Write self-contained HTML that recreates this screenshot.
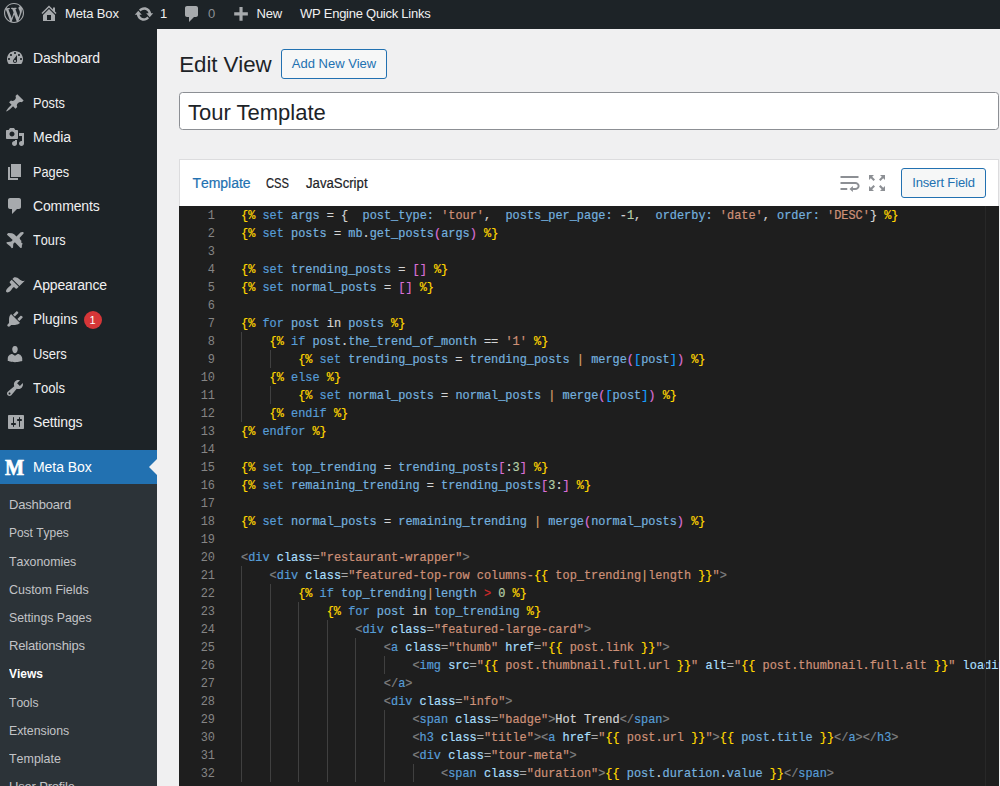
<!DOCTYPE html>
<html lang="en"><head><meta charset="utf-8"><title>Edit View ‹ Meta Box — WordPress</title>
<style>
*{box-sizing:border-box;margin:0;padding:0}
html,body{width:1000px;height:786px;overflow:hidden;background:#f0f0f1;font-family:"Liberation Sans",sans-serif}
body{position:relative}
.t{position:absolute;white-space:pre;line-height:1.2;font-kerning:none}
.ic{position:absolute;display:block}
#bar{position:absolute;left:0;top:0;width:1000px;height:29px;background:#1d2327}
#menu{position:absolute;left:0;top:29px;width:157px;height:757px;background:#1d2327}
#menu .t,#menu .ic,#menu>div{margin-top:-29px}
#active{position:absolute;left:0;top:450px;width:157px;height:34px;background:#2271b1}
#arrow{position:absolute;left:149px;top:459px;width:0;height:0;border:8px solid transparent;border-left:0;border-right:8px solid #f0f0f1}
#sub{position:absolute;left:0;top:484px;width:157px;height:302px;background:#2c3338}
.badge{left:84px;top:311px;width:18px;height:18px;border-radius:9px;background:#d63638;color:#fff;font-size:11px;line-height:18px;text-align:center;text-indent:-1px}
.btn{position:absolute;border:1px solid #2271b1;border-radius:3px;background:#f6f7f7;color:#2271b1;font-size:13px;text-align:center;line-height:28px;white-space:pre}
#title{position:absolute;left:179px;top:92px;width:820px;height:38px;border:1px solid #8c8f94;border-radius:3.5px;background:#fff;color:#1d2327;font-size:22px;line-height:36px;padding-left:8px;padding-top:2px;white-space:pre}
#panel{position:absolute;left:179px;top:159px;width:820px;height:627px;background:#fff;border:1px solid #dcdcde}
.sb{-webkit-text-stroke:.2px currentColor}
#ed{position:absolute;left:179px;top:206px;width:820px;height:580px;background:#1e1e1e;overflow:hidden;font-family:"Liberation Mono",monospace;font-size:11.9px;letter-spacing:0.0065px;color:#d4d4d4;font-kerning:none;-webkit-text-stroke:.2px currentColor}
.ln{position:absolute;left:62px;height:18px;line-height:18px;white-space:pre}
.no{position:absolute;right:100%;margin-right:26px;color:#858585;-webkit-text-stroke:0}
.gd{position:absolute;width:1px;background:#404040}
#ruler{position:absolute;left:806px;top:0;width:1px;height:580px;background:#282828}
.k{color:#569cd6}.v{color:#74b0df}.s{color:#ce9178}.y{color:#ffd700}.m{color:#da70d6}.b{color:#179fff}
.w{color:#d4d4d4}.g{color:#808080}.n{color:#b5cea8}.r{color:#d12a2a}.p{color:#d7a06a}.at{color:#a8defc}.e{color:#a8a8a8}

</style></head>
<body>
<div id="bar">
<svg class="ic" style="left:4px;top:3px;width:20px;height:20px" viewBox="0 0 20 20"><path fill="#a7aaad" d="M20 10c0-5.51-4.49-10-10-10C4.48 0 0 4.49 0 10c0 5.52 4.48 10 10 10 5.51 0 10-4.48 10-10zM7.78 15.37L4.37 6.22c.55-.02 1.17-.08 1.17-.08.5-.06.44-1.13-.06-1.11 0 0-1.45.11-2.37.11-.18 0-.37 0-.58-.01C4.12 2.69 6.87 1.11 10 1.11c2.33 0 4.45.87 6.05 2.34-.68-.11-1.65.39-1.65 1.58 0 .74.45 1.36.9 2.1.35.61.55 1.36.55 2.46 0 1.49-1.4 5-1.4 5l-3.03-8.37c.54-.02.82-.17.82-.17.5-.05.44-1.25-.06-1.22 0 0-1.44.12-2.38.12-.87 0-2.33-.12-2.33-.12-.5-.03-.56 1.2-.06 1.22l.92.08 1.26 3.41zM17.41 10c.24-.64.74-1.87.43-4.25.7 1.29 1.05 2.71 1.05 4.25 0 3.29-1.73 6.24-4.4 7.78.97-2.59 1.94-5.2 2.92-7.78zM6.1 18.09C3.12 16.65 1.11 13.53 1.11 10c0-1.3.23-2.48.72-3.59C3.25 10.3 4.67 14.2 6.1 18.09zm4.03-6.63l2.58 6.98c-.86.29-1.76.45-2.71.45-.79 0-1.57-.11-2.29-.33.81-2.38 1.62-4.74 2.42-7.1z"/></svg>
<svg class="ic" style="left:39px;top:3px;width:20px;height:20px" viewBox="0 0 20 20"><path fill="#a7aaad" d="M16 8.5l1.53 1.53-1.06 1.06L10 4.62l-6.47 6.47-1.06-1.06L10 2.5l4 4v-2h2v4zm-6-2.46l6 5.99V18H4v-5.97zM12 17v-5H8v5h4z"/></svg>
<div class="t " style="left:65px;top:6px;font-size:13px;color:#f0f0f1;letter-spacing:-0.14px;">Meta Box</div>
<svg class="ic" style="left:134px;top:4px;width:20px;height:20px" viewBox="0 0 20 20"><path fill="#a7aaad" d="M10.2 3.28c3.53 0 6.43 2.61 6.92 6h2.08l-3.5 4-3.5-4h2.32c-.45-1.97-2.21-3.45-4.32-3.45-1.45 0-2.73.71-3.54 1.78L4.95 5.66C6.23 4.2 8.11 3.28 10.2 3.28zm-.4 13.44c-3.52 0-6.43-2.61-6.92-6H.8l3.5-4c1.17 1.33 2.33 2.67 3.5 4H5.48c.45 1.97 2.21 3.45 4.32 3.45 1.45 0 2.73-.71 3.54-1.78l1.71 1.95c-1.28 1.46-3.15 2.38-5.25 2.38z"/></svg>
<div class="t " style="left:160px;top:6px;font-size:13px;color:#f0f0f1;">1</div>
<svg class="ic" style="left:181.6px;top:4px;width:20px;height:20px" viewBox="0 0 20 20"><path fill="#a7aaad" d="M5 2h9c1.1 0 2 .9 2 2v7c0 1.1-.9 2-2 2h-2l-5 5v-5H5c-1.1 0-2-.9-2-2V4c0-1.1.9-2 2-2z"/></svg>
<div class="t " style="left:208px;top:6px;font-size:13px;color:#8c8f94;">0</div>
<svg class="ic" style="left:230px;top:4.5px;width:21px;height:21px" viewBox="0 0 20 20"><path fill="#a7aaad" d="M17 7v3h-5v5H9v-5H4V7h5V2h3v5h5z"/></svg>
<div class="t " style="left:256.5px;top:6px;font-size:13px;color:#f0f0f1;letter-spacing:-0.2px;">New</div>
<div class="t " style="left:300px;top:6px;font-size:13px;color:#f0f0f1;letter-spacing:-0.26px;">WP Engine Quick Links</div>
</div>
<div id="menu">
<svg class="ic" style="left:5px;top:48px;width:20px;height:20px" viewBox="0 0 20 20"><path fill="#a7aaad" d="M3.76 16h12.48c1.1-1.37 1.76-3.11 1.76-5 0-4.42-3.58-8-8-8s-8 3.58-8 8c0 1.89.66 3.63 1.76 5zM10 4c.55 0 1 .45 1 1s-.45 1-1 1-1-.45-1-1 .45-1 1-1zM6 6c.55 0 1 .45 1 1s-.45 1-1 1-1-.45-1-1 .45-1 1-1zm8 0c.55 0 1 .45 1 1s-.45 1-1 1-1-.45-1-1 .45-1 1-1zm-5.37 5.55L12 7v6c0 1.1-.9 2-2 2s-2-.9-2-2c0-.57.24-1.08.63-1.45zM4 10c.55 0 1 .45 1 1s-.45 1-1 1-1-.45-1-1 .45-1 1-1zm12 0c.55 0 1 .45 1 1s-.45 1-1 1-1-.45-1-1 .45-1 1-1zm-5 3c0-.55-.45-1-1-1s-1 .45-1 1 .45 1 1 1 1-.45 1-1z"/></svg>
<div class="t " style="left:33.0px;top:50.0px;font-size:14px;color:#f0f0f1;letter-spacing:-0.175px;">Dashboard</div>
<svg class="ic" style="left:5px;top:93px;width:20px;height:20px" viewBox="0 0 20 20"><path fill="#a7aaad" d="M10.44 3.02l1.82-1.82 6.36 6.35-1.83 1.82c-1.05-.68-2.48-.57-3.41.36l-.75.75c-.92.93-1.04 2.35-.35 3.41l-1.83 1.82-2.41-2.41-2.8 2.79c-.42.42-3.38 2.71-3.8 2.29s1.86-3.39 2.28-3.81l2.79-2.79L4.1 9.36l1.83-1.82c1.05.69 2.48.57 3.4-.36l.75-.75c.93-.92 1.05-2.35.36-3.41z"/></svg>
<div class="t " style="left:33.1px;top:95.0px;font-size:14px;color:#f0f0f1;transform:scaleX(0.9101);transform-origin:0 0;">Posts</div>
<svg class="ic" style="left:5px;top:127px;width:20px;height:20px" viewBox="0 0 20 20"><path fill="#a7aaad" d="M13 11V4c0-.55-.45-1-1-1h-1.67L9 1H5L3.67 3H2c-.55 0-1 .45-1 1v7c0 .55.45 1 1 1h10c.55 0 1-.45 1-1zM7 4.5c1.38 0 2.5 1.12 2.5 2.5S8.38 9.5 7 9.5 4.500 8.380 4.500 7 5.620 4.500 7 4.500zM14 6h5v10.500c0 1.380-1.120 2.500-2.500 2.500S14 17.880 14 16.500s1.120-2.500 2.500-2.500c.170 0 .340.020.500.050V9h-3V6zm-4 8.050V13h2v3.500c0 1.380-1.120 2.500-2.500 2.500S7 17.880 7 16.500 8.120 14 9.500 14c.170 0 .340.020.500.050z"/></svg>
<div class="t " style="left:33.0px;top:129.0px;font-size:14px;color:#f0f0f1;">Media</div>
<svg class="ic" style="left:5px;top:162px;width:20px;height:20px" viewBox="0 0 20 20"><path fill="#a7aaad" d="M6 15V2h10v13H6zm-1 1h8v2H3V5h2v11z"/></svg>
<div class="t " style="left:33.1px;top:164.0px;font-size:14px;color:#f0f0f1;transform:scaleX(0.9106);transform-origin:0 0;">Pages</div>
<svg class="ic" style="left:5px;top:196px;width:20px;height:20px" viewBox="0 0 20 20"><path fill="#a7aaad" d="M5 2h9c1.1 0 2 .9 2 2v7c0 1.1-.9 2-2 2h-2l-5 5v-5H5c-1.1 0-2-.9-2-2V4c0-1.1.9-2 2-2z"/></svg>
<div class="t " style="left:33.0px;top:198.0px;font-size:14px;color:#f0f0f1;letter-spacing:-0.143px;">Comments</div>
<div class="t " style="left:33.03px;top:232.0px;font-size:14px;color:#f0f0f1;transform:scaleX(0.9085);transform-origin:0 0;">Tours</div>
<svg class="ic" style="left:5px;top:275px;width:20px;height:20px" viewBox="0 0 20 20"><path fill="#a7aaad" d="M14.480 11.060L7.410 3.990l1.500-1.500c.500-.560 2.300-.470 3.510.320 1.210.800 1.430 1.280 2.910 2.100 1.180.640 2.450 1.260 4.450.850zm-.710.710L6.700 4.700 4.930 6.470c-.390.390-.390 1.020 0 1.410l1.060 1.060c.390.390.390 1.030 0 1.420-.600.600-1.430 1.110-2.210 1.690-.350.260-.700.530-1.010.840C1.430 14.230.400 16.080 1.400 17.070c.990 1 2.840-.030 4.180-1.360.310-.310.580-.660.850-1.020.570-.780 1.080-1.610 1.690-2.210.390-.390 1.020-.390 1.410 0l1.060 1.060c.390.390 1.020.390 1.410 0z"/></svg>
<div class="t " style="left:33.0px;top:277.0px;font-size:14px;color:#f0f0f1;letter-spacing:-0.156px;">Appearance</div>
<svg class="ic" style="left:5px;top:309px;width:20px;height:20px" viewBox="0 0 20 20"><path fill="#a7aaad" d="M13.110 4.360L9.870 7.600 8 5.730l3.240-3.240c.350-.340 1.050-.200 1.560.320.520.510.660 1.210.310 1.550zm-8 1.770l.910-1.120 9.010 9.010-1.190.840c-.710.710-2.630 1.160-3.820 1.160H6.140L4.900 17.260c-.590.590-1.540.590-2.120 0-.590-.580-.590-1.530 0-2.120l1.240-1.240v-3.880c0-1.130.400-3.190 1.090-3.890zm7.260 3.970l3.240-3.240c.340-.350 1.040-.210 1.550.310.520.510.660 1.210.310 1.550l-3.240 3.250z"/></svg>
<div class="t " style="left:33.04px;top:311.0px;font-size:14px;color:#f0f0f1;transform:scaleX(0.9684);transform-origin:0 0;">Plugins</div>
<svg class="ic" style="left:5px;top:344px;width:20px;height:20px" viewBox="0 0 20 20"><path fill="#a7aaad" d="M10 9.250c-2.270 0-2.730-3.440-2.730-3.440C7 4.020 7.820 2 9.970 2c2.160 0 2.980 2.020 2.710 3.810 0 0-.410 3.440-2.680 3.440zm0 2.570L12.720 10c2.390 0 4.520 2.330 4.520 4.530v2.490s-3.650 1.130-7.240 1.130c-3.650 0-7.240-1.130-7.240-1.130v-2.490c0-2.250 1.940-4.480 4.470-4.480z"/></svg>
<div class="t " style="left:33.08px;top:346.0px;font-size:14px;color:#f0f0f1;transform:scaleX(0.9257);transform-origin:0 0;">Users</div>
<svg class="ic" style="left:5px;top:378px;width:20px;height:20px" viewBox="0 0 20 20"><path fill="#a7aaad" d="M16.680 9.770c-1.340 1.340-3.300 1.670-4.950.990l-5.410 6.520c-.990.990-2.590.990-3.580 0s-.990-2.590 0-3.570l6.520-5.420c-.680-1.650-.350-3.610.990-4.950 1.280-1.280 3.120-1.620 4.720-1.060l-2.890 2.890 2.820 2.820 2.860-2.870c.530 1.580.180 3.390-1.080 4.650zM3.810 16.210c.400.390 1.040.390 1.430 0 .400-.400.400-1.040 0-1.430-.390-.400-1.030-.400-1.430 0-.390.390-.390 1.030 0 1.430z"/></svg>
<div class="t " style="left:33.02px;top:380.0px;font-size:14px;color:#f0f0f1;transform:scaleX(0.9342);transform-origin:0 0;">Tools</div>
<svg class="ic" style="left:5.5px;top:412px;width:20px;height:20px" viewBox="0 0 20 20"><path fill="#a7aaad" d="M18 16V4c0-.550-.450-1-1-1H3c-.550 0-1 .450-1 1v12c0 .550.450 1 1 1h14c.550 0 1-.450 1-1zM8 11h1c.550 0 1 .450 1 1s-.450 1-1 1H8v1.500c0 .280-.220.500-.500.500s-.500-.220-.500-.500V13H6c-.550 0-1-.450-1-1s.450-1 1-1h1V5.500c0-.280.220-.500.500-.500s.500.220.500.500V11zm5-2h-1c-.550 0-1-.450-1-1s.450-1 1-1h1V5.500c0-.280.220-.500.500-.500s.500.220.500.500V7h1c.550 0 1 .450 1 1s-.450 1-1 1h-1v5.500c0 .280-.220.500-.500.500s-.500-.220-.500-.500V9z"/></svg>
<div class="t " style="left:33.0px;top:414.0px;font-size:14px;color:#f0f0f1;letter-spacing:-0.143px;">Settings</div>
<svg class="ic" style="left:0;top:225px;width:40px;height:31px" viewBox="0 0 1000 775"><path fill="#a7aaad" d="M575 178Q600 190 590 215L488 325L512 372L536 392L530 440L566 462L548 505L545 568L512 576L372 432L332 470L326 570L292 580L262 535L168 462L162 432L282 414L318 372L176 246L178 222L208 200L296 204L318 214L362 236L372 252L412 290L510 188Q545 165 575 178Z"/></svg>
<div class="badge t">1</div>
<div id="active"></div><div id="arrow"></div>
<div class="t " style="left:5.3px;top:453.7px;font-size:22.5px;color:#fff;font-weight:700;font-family:'Liberation Serif', serif;transform:scaleX(.9);transform-origin:0 0;-webkit-text-stroke:.7px #fff;">M</div>
<div class="t " style="left:33.0px;top:459.0px;font-size:14px;color:#fff;letter-spacing:-0.057px;">Meta Box</div>
<div id="sub"></div>
<div class="t " style="left:9.0px;top:497.0px;font-size:13px;color:#c3c4c7;letter-spacing:-0.175px;">Dashboard</div>
<div class="t " style="left:9.09px;top:525.2px;font-size:13px;color:#c3c4c7;transform:scaleX(0.9197);transform-origin:0 0;">Post Types</div>
<div class="t " style="left:9.01px;top:554.4px;font-size:13px;color:#c3c4c7;transform:scaleX(0.9500);transform-origin:0 0;">Taxonomies</div>
<div class="t " style="left:9.03px;top:581.6px;font-size:13px;color:#c3c4c7;transform:scaleX(0.9585);transform-origin:0 0;">Custom Fields</div>
<div class="t " style="left:9.03px;top:609.8px;font-size:13px;color:#c3c4c7;transform:scaleX(0.9444);transform-origin:0 0;">Settings Pages</div>
<div class="t " style="left:9.0px;top:638.0px;font-size:13px;color:#c3c4c7;letter-spacing:-0.167px;">Relationships</div>
<div class="t " style="left:9.01px;top:666.2px;font-size:13px;color:#fff;font-weight:700;transform:scaleX(0.9227);transform-origin:0 0;">Views</div>
<div class="t " style="left:9.02px;top:694.9px;font-size:13px;color:#c3c4c7;transform:scaleX(0.9291);transform-origin:0 0;">Tools</div>
<div class="t " style="left:9.06px;top:722.6px;font-size:13px;color:#c3c4c7;transform:scaleX(0.9468);transform-origin:0 0;">Extensions</div>
<div class="t " style="left:9.01px;top:750.8px;font-size:13px;color:#c3c4c7;transform:scaleX(0.9569);transform-origin:0 0;">Template</div>
<div class="t " style="left:9.0px;top:779.0px;font-size:13px;color:#c3c4c7;letter-spacing:-0.182px;">User Profile</div>
</div>
<div class="t " style="left:179.3px;top:52.2px;font-size:22.3px;color:#1d2327;letter-spacing:-0.075px;">Edit View</div>
<div id="addnew" class="btn" style="left:281px;top:49px;width:106px;height:30px;"><span>Add New View</span></div>
<div id="title"><span>Tour Template</span></div>
<div id="panel"></div>
<div class="t sb" style="left:192.5px;top:175.4px;font-size:14px;color:#2271b1;letter-spacing:-0.043px;">Template</div>
<div class="t sb" style="left:266.45px;top:175.4px;font-size:14px;color:#1d2327;transform:scaleX(0.7959);transform-origin:0 0;">CSS</div>
<div class="t sb" style="left:306.21px;top:175.4px;font-size:14px;color:#1d2327;transform:scaleX(0.9416);transform-origin:0 0;">JavaScript</div>
<svg class="ic" style="left:835.6px;top:171px;width:27px;height:24px" viewBox="0 0 24 24" preserveAspectRatio="none"><path fill="#8c8f94" d="M4 19h6v-2H4v2zM20 5H4v2h16V5zm-3 6H4v2h13.250c1.100 0 2 .900 2 2s-.900 2-2 2H15v-2l-3 3 3 3v-2h2c2.210 0 4-1.790 4-4s-1.790-4-4-4z"/></svg>
<svg class="ic" style="left:867px;top:173px;width:20px;height:20px" viewBox="0 0 20 20"><path fill="#8c8f94" d="M7 2H2v5l1.800-1.800L6.500 8 8 6.500 5.200 3.800 7 2zm6 0l1.800 1.800L12 6.500 13.500 8l2.700-2.700L18 7V2h-5zm.5 10L12 13.500l2.700 2.700L13 18h5v-5l-1.800 1.800-2.700-2.800zm-7 0l-2.700 2.700L2 13v5h5l-1.800-1.800L8 13.500 6.500 12z"/></svg>
<div id="insert" class="btn" style="left:901px;top:168px;width:85px;height:30px;letter-spacing:-0.14px;"><span>Insert Field</span></div>
<div id="ed">
<i class="gd" style="left:62.0px;top:126px;height:90px"></i>
<i class="gd" style="left:90.59px;top:144px;height:18px"></i>
<i class="gd" style="left:90.59px;top:180px;height:18px"></i>
<i class="gd" style="left:62.0px;top:360px;height:216px"></i>
<i class="gd" style="left:90.59px;top:378px;height:198px"></i>
<i class="gd" style="left:119.18px;top:396px;height:180px"></i>
<i class="gd" style="left:147.77px;top:414px;height:162px"></i>
<i class="gd" style="left:176.36px;top:432px;height:144px"></i>
<i class="gd" style="left:204.95px;top:450px;height:18px"></i>
<i class="gd" style="left:204.95px;top:504px;height:72px"></i>
<i class="gd" style="left:233.54px;top:558px;height:18px"></i>
<div class="ln" style="top:1px"><span class="no">1</span><span class="y">{%</span> <span class="k">set</span> <span class="v">args</span> <span class="w">=</span> <span class="w">{</span>  <span class="v">post_type</span><span class="v">:</span> <span class="s">&#x27;tour&#x27;</span><span class="w">,</span>  <span class="v">posts_per_page</span><span class="v">:</span> <span class="w">-</span><span class="n">1</span><span class="w">,</span>  <span class="v">orderby</span><span class="v">:</span> <span class="s">&#x27;date&#x27;</span><span class="w">,</span> <span class="v">order</span><span class="v">:</span> <span class="s">&#x27;DESC&#x27;</span><span class="w">}</span> <span class="y">%}</span></div>
<div class="ln" style="top:19px"><span class="no">2</span><span class="y">{%</span> <span class="k">set</span> <span class="v">posts</span> <span class="w">=</span> <span class="v">mb</span><span class="w">.</span><span class="v">get_posts</span><span class="m">(</span><span class="v">args</span><span class="m">)</span> <span class="y">%}</span></div>
<div class="ln" style="top:37px"><span class="no">3</span></div>
<div class="ln" style="top:55px"><span class="no">4</span><span class="y">{%</span> <span class="k">set</span> <span class="v">trending_posts</span> <span class="w">=</span> <span class="m">[]</span> <span class="y">%}</span></div>
<div class="ln" style="top:73px"><span class="no">5</span><span class="y">{%</span> <span class="k">set</span> <span class="v">normal_posts</span> <span class="w">=</span> <span class="m">[]</span> <span class="y">%}</span></div>
<div class="ln" style="top:91px"><span class="no">6</span></div>
<div class="ln" style="top:109px"><span class="no">7</span><span class="y">{%</span> <span class="k">for</span> <span class="v">post</span> <span class="w">in</span> <span class="v">posts</span> <span class="y">%}</span></div>
<div class="ln" style="top:127px"><span class="no">8</span>    <span class="y">{%</span> <span class="k">if</span> <span class="v">post</span><span class="w">.</span><span class="v">the_trend_of_month</span> <span class="w">==</span> <span class="s">&#x27;1&#x27;</span> <span class="y">%}</span></div>
<div class="ln" style="top:145px"><span class="no">9</span>        <span class="y">{%</span> <span class="k">set</span> <span class="v">trending_posts</span> <span class="w">=</span> <span class="v">trending_posts</span> <span class="p">|</span> <span class="v">merge</span><span class="m">(</span><span class="b">[</span><span class="v">post</span><span class="b">]</span><span class="m">)</span> <span class="y">%}</span></div>
<div class="ln" style="top:163px"><span class="no">10</span>    <span class="y">{%</span> <span class="k">else</span> <span class="y">%}</span></div>
<div class="ln" style="top:181px"><span class="no">11</span>        <span class="y">{%</span> <span class="k">set</span> <span class="v">normal_posts</span> <span class="w">=</span> <span class="v">normal_posts</span> <span class="p">|</span> <span class="v">merge</span><span class="m">(</span><span class="b">[</span><span class="v">post</span><span class="b">]</span><span class="m">)</span> <span class="y">%}</span></div>
<div class="ln" style="top:199px"><span class="no">12</span>    <span class="y">{%</span> <span class="k">endif</span> <span class="y">%}</span></div>
<div class="ln" style="top:217px"><span class="no">13</span><span class="y">{%</span> <span class="k">endfor</span> <span class="y">%}</span></div>
<div class="ln" style="top:235px"><span class="no">14</span></div>
<div class="ln" style="top:253px"><span class="no">15</span><span class="y">{%</span> <span class="k">set</span> <span class="v">top_trending</span> <span class="w">=</span> <span class="v">trending_posts</span><span class="m">[</span><span class="w">:</span><span class="n">3</span><span class="m">]</span> <span class="y">%}</span></div>
<div class="ln" style="top:271px"><span class="no">16</span><span class="y">{%</span> <span class="k">set</span> <span class="v">remaining_trending</span> <span class="w">=</span> <span class="v">trending_posts</span><span class="m">[</span><span class="n">3</span><span class="w">:</span><span class="m">]</span> <span class="y">%}</span></div>
<div class="ln" style="top:289px"><span class="no">17</span></div>
<div class="ln" style="top:307px"><span class="no">18</span><span class="y">{%</span> <span class="k">set</span> <span class="v">normal_posts</span> <span class="w">=</span> <span class="v">remaining_trending</span> <span class="p">|</span> <span class="v">merge</span><span class="m">(</span><span class="v">normal_posts</span><span class="m">)</span> <span class="y">%}</span></div>
<div class="ln" style="top:325px"><span class="no">19</span></div>
<div class="ln" style="top:343px"><span class="no">20</span><span class="g">&lt;</span><span class="k">div</span> <span class="at">class</span><span class="e">=</span><span class="s">&quot;restaurant-wrapper&quot;</span><span class="g">&gt;</span></div>
<div class="ln" style="top:361px"><span class="no">21</span>    <span class="g">&lt;</span><span class="k">div</span> <span class="at">class</span><span class="e">=</span><span class="s">&quot;featured-top-row columns-</span><span class="y">{{</span><span class="s"> top_trending</span><span class="p">|</span><span class="s">length </span><span class="y">}}</span><span class="s">&quot;</span><span class="g">&gt;</span></div>
<div class="ln" style="top:379px"><span class="no">22</span>        <span class="y">{%</span> <span class="k">if</span> <span class="v">top_trending</span><span class="p">|</span><span class="v">length</span> <span class="r">&gt;</span> <span class="n">0</span> <span class="y">%}</span></div>
<div class="ln" style="top:397px"><span class="no">23</span>            <span class="y">{%</span> <span class="k">for</span> <span class="v">post</span> <span class="w">in</span> <span class="v">top_trending</span> <span class="y">%}</span></div>
<div class="ln" style="top:415px"><span class="no">24</span>                <span class="g">&lt;</span><span class="k">div</span> <span class="at">class</span><span class="e">=</span><span class="s">&quot;featured-large-card&quot;</span><span class="g">&gt;</span></div>
<div class="ln" style="top:433px"><span class="no">25</span>                    <span class="g">&lt;</span><span class="k">a</span> <span class="at">class</span><span class="e">=</span><span class="s">&quot;thumb&quot;</span> <span class="at">href</span><span class="e">=</span><span class="s">&quot;</span><span class="y">{{</span><span class="s"> post.link </span><span class="y">}}</span><span class="s">&quot;</span><span class="g">&gt;</span></div>
<div class="ln" style="top:451px"><span class="no">26</span>                        <span class="g">&lt;</span><span class="k">img</span> <span class="at">src</span><span class="e">=</span><span class="s">&quot;</span><span class="y">{{</span><span class="s"> post.thumbnail.full.url </span><span class="y">}}</span><span class="s">&quot;</span> <span class="at">alt</span><span class="e">=</span><span class="s">&quot;</span><span class="y">{{</span><span class="s"> post.thumbnail.full.alt </span><span class="y">}}</span><span class="s">&quot;</span> <span class="at">loading</span><span class="e">=</span><span class="s">&quot;lazy&quot;</span><span class="g">&gt;</span></div>
<div class="ln" style="top:469px"><span class="no">27</span>                    <span class="g">&lt;/</span><span class="k">a</span><span class="g">&gt;</span></div>
<div class="ln" style="top:487px"><span class="no">28</span>                    <span class="g">&lt;</span><span class="k">div</span> <span class="at">class</span><span class="e">=</span><span class="s">&quot;info&quot;</span><span class="g">&gt;</span></div>
<div class="ln" style="top:505px"><span class="no">29</span>                        <span class="g">&lt;</span><span class="k">span</span> <span class="at">class</span><span class="e">=</span><span class="s">&quot;badge&quot;</span><span class="g">&gt;</span><span class="w">Hot Trend</span><span class="g">&lt;/</span><span class="k">span</span><span class="g">&gt;</span></div>
<div class="ln" style="top:523px"><span class="no">30</span>                        <span class="g">&lt;</span><span class="k">h3</span> <span class="at">class</span><span class="e">=</span><span class="s">&quot;title&quot;</span><span class="g">&gt;</span><span class="g">&lt;</span><span class="k">a</span> <span class="at">href</span><span class="e">=</span><span class="s">&quot;</span><span class="y">{{</span><span class="s"> post.url </span><span class="y">}}</span><span class="s">&quot;</span><span class="g">&gt;</span><span class="y">{{</span> <span class="v">post</span><span class="w">.</span><span class="v">title</span> <span class="y">}}</span><span class="g">&lt;/</span><span class="k">a</span><span class="g">&gt;</span><span class="g">&lt;/</span><span class="k">h3</span><span class="g">&gt;</span></div>
<div class="ln" style="top:541px"><span class="no">31</span>                        <span class="g">&lt;</span><span class="k">div</span> <span class="at">class</span><span class="e">=</span><span class="s">&quot;tour-meta&quot;</span><span class="g">&gt;</span></div>
<div class="ln" style="top:559px"><span class="no">32</span>                            <span class="g">&lt;</span><span class="k">span</span> <span class="at">class</span><span class="e">=</span><span class="s">&quot;duration&quot;</span><span class="g">&gt;</span><span class="y">{{</span> <span class="v">post</span><span class="w">.</span><span class="v">duration</span><span class="w">.</span><span class="v">value</span> <span class="y">}}</span><span class="g">&lt;/</span><span class="k">span</span><span class="g">&gt;</span></div>
<i id="ruler"></i>
</div>
</body></html>
